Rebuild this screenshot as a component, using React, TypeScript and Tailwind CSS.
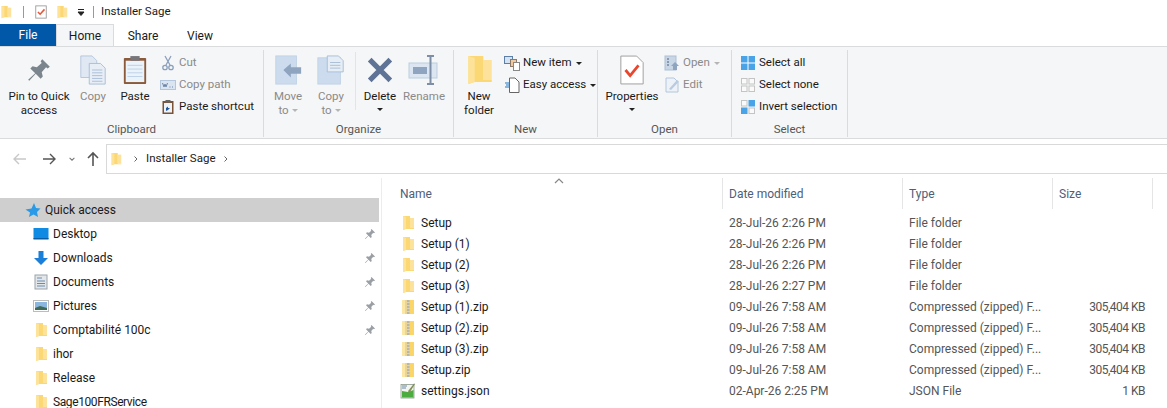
const font = "font-['Roboto','Noto_Sans',sans-serif]";

function Folder({ className = "w-4 h-4" }: { className?: string }) {
  return (
    <svg viewBox="0 0 16 16" preserveAspectRatio="none" className={className}>
      <path d="M10 3 L14 3 L14 13 L10 13Z" fill="#fce29a" />
      <path d="M3 1 L10 1 L10 13 L14 13 L14 14 L6 14 L3 15Z" fill="#fcd874" />
      <path d="M3 1 L6 2 L6 14 L3 15Z" fill="#fde39a" />
    </svg>
  );
}

function Zip() {
  return (
    <svg viewBox="0 0 16 16" className="w-4 h-4">
      <path d="M2 1 L14 1 L14 15 L2 15Z" fill="#fcd567" />
      <path d="M2 1 L5 1 L5 15 L2 15Z" fill="#fbe6a3" />
      <rect x="6.5" y="1" width="3.5" height="14" fill="#d8d4c4" />
      <path d="M7 2 H9.5 M7 5 H9.5 M7 8 H9.5 M7 11 H9.5 M7 14 H9.5" stroke="#8f8c7e" strokeWidth="0.8" />
    </svg>
  );
}

function Json() {
  return (
    <svg viewBox="0 0 16 16" className="w-4 h-4">
      <rect x="1" y="1.5" width="13" height="13.5" fill="#f4f4f0" stroke="#8b9a8b" strokeWidth="0.8" />
      <path d="M2 14.5 L13.5 14.5 L13.5 7 L8 9 L2 8Z" fill="#4bac3f" />
      <path d="M2 3 H7 M2 5 H6" stroke="#6a87a8" strokeWidth="1" />
      <path d="M15 1 L10 9 L8 9.5 L8.5 7.5 L14 0.5Z" fill="#7f8f55" />
    </svg>
  );
}

function Pin({ className = "w-3 h-3", color = "#9a9fa5" }: { className?: string; color?: string }) {
  return (
    <svg viewBox="0 0 24 24" className={className}>
      <path d="M15 2 L22 9 L20 10.5 L18.5 9.5 L14.5 14 L15.5 18 L13.5 20 L9 15.5 L3 22 L2 21 L8.5 15 L4 10.5 L6 8.5 L10 9.5 L14.5 5.5 L13.5 4Z" fill={color} />
    </svg>
  );
}

function Large({ w, label, sub, icon, dim, caret, subCaret }: { w: string; label: string; sub?: string; icon: React.ReactNode; dim?: boolean; caret?: boolean; subCaret?: boolean }) {
  return (
    <div className={`${w} flex flex-col items-center shrink-0 text-center leading-[14px] ${dim ? "text-[#8a8a8a]" : "text-[#1a1a1a]"}`}>
      <div className="h-[36px] flex items-center justify-center mb-[1px]">{icon}</div>
      <span className="whitespace-nowrap">{label}</span>
      {sub && (
        <span className="whitespace-nowrap flex items-center">
          {sub}
          {subCaret && <span className="ml-[3px] w-0 h-0 border-x-[3px] border-x-transparent border-t-[3px] border-t-[#b5b5b5]" />}
        </span>
      )}
      {caret && <Caret />}
    </div>
  );
}

function Caret() {
  return <span className="inline-block mx-auto mt-[5px] w-0 h-0 border-x-[3px] border-x-transparent border-t-[3px] border-t-[#222]" />;
}

function Small({ icon, label, dim, caret, lightCaret }: { icon: React.ReactNode; label: string; dim?: boolean; caret?: boolean; lightCaret?: boolean }) {
  return (
    <div className={`h-[22px] flex items-center whitespace-nowrap ${dim ? "text-[#8a8a8a]" : "text-[#1a1a1a]"}`}>
      <span className="w-[16px] h-[16px] mr-[3px] flex items-center justify-center">{icon}</span>
      <span>{label}</span>
      {caret && <span className={`ml-[4px] w-0 h-0 border-x-[3px] border-x-transparent border-t-[3px] ${lightCaret ? "border-t-[#b5b5b5]" : "border-t-[#222]"}`} />}
    </div>
  );
}

function Group({ w, label, children }: { w: string; label: string; children: React.ReactNode }) {
  return (
    <div className={`${w} shrink-0 h-[87px] mt-[3px] flex flex-col border-r border-[#dadbdc]`}>
      <div className="flex h-[70px] pt-[2px]">{children}</div>
      <div className="text-center text-[#555] leading-[14px] mt-[2px]">{label}</div>
    </div>
  );
}

function SideRow({ icon, label, pinned, tight }: { icon: React.ReactNode; label: string; pinned?: boolean; tight?: boolean }) {
  return (
    <div className="h-[24px] flex items-center pl-[33px] pr-[3px] text-[#1a1a1a]">
      <span className="w-[16px] h-[16px] mr-[4px] flex items-center justify-center">{icon}</span>
      <span className={`flex-1 ${tight ? "tracking-[-0.4px]" : ""}`}>{label}</span>
      {pinned && <Pin />}
    </div>
  );
}

const files = [
  { name: "Setup", date: "28-Jul-26 2:26 PM", type: "File folder", size: "", kind: "d" },
  { name: "Setup (1)", date: "28-Jul-26 2:26 PM", type: "File folder", size: "", kind: "d" },
  { name: "Setup (2)", date: "28-Jul-26 2:26 PM", type: "File folder", size: "", kind: "d" },
  { name: "Setup (3)", date: "28-Jul-26 2:27 PM", type: "File folder", size: "", kind: "d" },
  { name: "Setup (1).zip", date: "09-Jul-26 7:58 AM", type: "Compressed (zipped) F...", size: "305,404 KB", kind: "z" },
  { name: "Setup (2).zip", date: "09-Jul-26 7:58 AM", type: "Compressed (zipped) F...", size: "305,404 KB", kind: "z" },
  { name: "Setup (3).zip", date: "09-Jul-26 7:58 AM", type: "Compressed (zipped) F...", size: "305,404 KB", kind: "z" },
  { name: "Setup.zip", date: "09-Jul-26 7:58 AM", type: "Compressed (zipped) F...", size: "305,404 KB", kind: "z" },
  { name: "settings.json", date: "02-Apr-26 2:25 PM", type: "JSON File", size: "1 KB", kind: "j" },
];

export default function App() {
  return (
    <div className={`${font} w-[1167px] h-[408px] overflow-hidden bg-white text-[12px] text-[#1a1a1a]`}>
      {/* title bar */}
      <div className="h-[24px] flex items-center text-[11.5px]">
        <Folder className="w-[14px] h-[14px] -ml-[1px]" />
        <div className="ml-[10px] w-px h-[12px] bg-[#999]" />
        <svg viewBox="0 0 16 16" className="ml-[10px] w-[14px] h-[14px]">
          <rect x="2" y="1" width="12" height="14" fill="#fff" stroke="#999" />
          <path d="M4.5 8 L7 10.5 L12 5" fill="none" stroke="#e8563a" strokeWidth="1.8" />
        </svg>
        <Folder className="ml-[7px] w-[14px] h-[14px]" />
        <svg viewBox="0 0 10 10" className="ml-[7px] w-[10px] h-[10px]">
          <path d="M2 2.5 H8 M2 5 H8 L5 8.5Z" stroke="#222" fill="#222" strokeWidth="1" />
        </svg>
        <div className="ml-[7px] w-px h-[12px] bg-[#999]" />
        <span className="ml-[7px]">Installer Sage</span>
      </div>

      {/* tabs */}
      <div className="h-[22px] flex items-stretch text-[12px] pt-[1px]">
        <div className="w-[56px] bg-[#0158a8] text-white flex items-center justify-center -mt-[1px]">File</div>
        <div className="w-[58px] bg-[#f5f6f7] border-x border-t border-[#dadbdc] flex items-center justify-center relative z-10 -mt-[1px]">Home</div>
        <div className="w-[58px] flex items-center justify-center">Share</div>
        <div className="w-[56px] flex items-center justify-center">View</div>
      </div>

      {/* ribbon */}
      <div className="h-[93px] bg-[#f5f6f7] border-y border-[#dadbdc] flex text-[11.5px]">
        <Group w="w-[264px]" label="Clipboard">
          <Large w="w-[78px]" label="Pin to Quick" sub="access" icon={<Pin className="w-[26px] h-[26px]" color="#7b858d" />} />
          <Large w="w-[30px]" label="Copy" dim icon={
            <svg viewBox="0 0 32 32" className="w-[30px] h-[32px]">
              <path d="M3 1 H15 L20 6 V24 H3Z" fill="#dfe8f3" stroke="#b4c6dc" />
              <path d="M12 9 H24 L29 14 V31 H12Z" fill="#e8eef6" stroke="#a9bdd6" />
              <path d="M15 16 H26 M15 19 H26 M15 22 H26 M15 25 H26 M15 28 H26" stroke="#a9bdd6" />
            </svg>
          } />
          <div className="w-[12px]" />
          <Large w="w-[30px]" label="Paste" icon={
            <svg viewBox="0 0 28 32" className="w-[26px] h-[32px]">
              <rect x="2" y="3" width="24" height="28" fill="#8b5a3a" rx="1" />
              <rect x="4" y="6" width="20" height="23" fill="#eaf2fa" />
              <path d="M6 11 H22 M6 15 H22 M6 19 H22 M6 23 H22" stroke="#bcd0e6" />
              <rect x="9" y="1" width="10" height="5" fill="#77767a" />
            </svg>
          } />
          <div className="ml-[10px] flex flex-col">
            <Small dim label="Cut" icon={
              <svg viewBox="0 0 16 16" className="w-4 h-4" fill="none" stroke="#8ba0bd" strokeWidth="1.3">
                <path d="M5 1 L10 10 M11 1 L6 10" />
                <circle cx="5" cy="12.5" r="2.2" />
                <circle cx="11" cy="12.5" r="2.2" />
              </svg>
            } />
            <Small dim label="Copy path" icon={
              <svg viewBox="0 0 16 16" className="w-4 h-4">
                <rect x="0.5" y="3.5" width="15" height="9" fill="#dbe5f1" stroke="#b4c6dc" />
                <path d="M2.5 6 L4 10 L5 7 L6 10 L7.5 6 M9.5 10 H10.5 M12 10 H13" fill="none" stroke="#6d87a8" />
              </svg>
            } />
            <Small label="Paste shortcut" icon={
              <svg viewBox="0 0 16 16" className="w-4 h-4">
                <rect x="2.5" y="2" width="11" height="13" fill="#7a5236" />
                <rect x="4" y="4" width="8" height="9.5" fill="#eef3f9" />
                <rect x="5.5" y="1" width="5" height="2.5" fill="#666" />
                <path d="M6 12 V9 L8 7.5 V9 H10 L8 11" fill="#1e56a0" />
              </svg>
            } />
          </div>
        </Group>

        <Group w="w-[190px]" label="Organize">
          <div className="w-[1px]" />
          <Large w="w-[46px]" label="Move" sub="to" subCaret dim icon={
            <svg viewBox="0 0 32 32" className="w-[30px] h-[32px]">
              <rect x="3" y="1" width="22" height="30" fill="#ccdcee" stroke="#c0d2e6" />
              <path d="M11 16 L19 9 V13 H30 V20 H19 V24Z" fill="#8fa5bf" />
            </svg>
          } />
          <Large w="w-[40px]" label="Copy" sub="to" subCaret dim icon={
            <svg viewBox="0 0 32 32" className="w-[30px] h-[32px]">
              <rect x="2" y="3" width="24" height="28" fill="#ccdcee" stroke="#c0d2e6" />
              <path d="M12 1 H24 L29 6 V18 H12Z" fill="#e6edf5" stroke="#a9bdd6" />
              <path d="M15 8 H26 M15 11 H26 M15 14 H26" stroke="#a9bdd6" />
            </svg>
          } />
          <div className="w-[1px] h-[58px] bg-[#e3e4e6] mx-[4px]" />
          <Large w="w-[40px]" label="Delete" caret icon={
            <svg viewBox="0 0 32 32" className="w-[30px] h-[30px]">
              <path d="M5 5 L27 27 M27 5 L5 27" stroke="#5f7396" strokeWidth="5.5" />
            </svg>
          } />
          <Large w="w-[48px]" label="Rename" dim icon={
            <svg viewBox="0 0 32 32" className="w-[32px] h-[32px]">
              <rect x="1" y="9" width="28" height="15" fill="#dbe6f2" stroke="#bccde0" />
              <rect x="5" y="13" width="14" height="7" fill="#8fa5bf" />
              <path d="M19 2 H26 M22.5 2 V30 M19 30 H26" fill="none" stroke="#7d8ea6" strokeWidth="2" />
            </svg>
          } />
        </Group>

        <Group w="w-[144px]" label="New">
          <div className="w-[7px]" />
          <Large w="w-[36px]" label="New" sub="folder" icon={<Folder className="w-[34px] h-[32px]" />} />
          <div className="ml-[7px] flex flex-col">
            <Small label="New item" caret icon={
              <svg viewBox="0 0 16 16" className="w-4 h-4">
                <rect x="0.5" y="1.5" width="8" height="7" fill="#d4e3f3" stroke="#5b7fa6" />
                <rect x="6.5" y="4.5" width="6" height="7" fill="#f0c9a0" stroke="#8d7a68" />
                <rect x="9.5" y="7.5" width="6" height="8" fill="#fff" stroke="#888" />
              </svg>
            } />
            <Small label="Easy access" caret icon={
              <svg viewBox="0 0 16 16" className="w-4 h-4">
                <path d="M5.5 1 H11 L15 5 V15.5 H5.5Z" fill="#fff" stroke="#666" />
                <path d="M1 6 H6 M2 8 H6 M1 10 H5" stroke="#1e78c8" />
              </svg>
            } />
          </div>
        </Group>

        <Group w="w-[134px]" label="Open">
          <div className="w-[6px]" />
          <Large w="w-[56px]" label="Properties" caret icon={
            <svg viewBox="0 0 28 32" className="w-[26px] h-[32px]">
              <path d="M2 1 H19 L26 8 V31 H2Z" fill="#fff" stroke="#9a9a9a" />
              <path d="M7 16 L12 22 L21 11" fill="none" stroke="#e8472e" strokeWidth="3" />
            </svg>
          } />
          <div className="ml-[4px] flex flex-col">
            <Small dim label="Open" caret lightCaret icon={
              <svg viewBox="0 0 16 16" className="w-4 h-4">
                <rect x="1" y="1" width="11" height="14" fill="#c8d6e6" stroke="#aebfd3" />
                <path d="M3 4 H5 M3 7 H5 M3 10 H5" stroke="#74889f" strokeWidth="1.5" />
                <path d="M11 7 L15 11 H13 V15 H9 V11 H7Z" fill="#8fa5bf" />
              </svg>
            } />
            <Small dim label="Edit" icon={
              <svg viewBox="0 0 16 16" className="w-4 h-4">
                <path d="M2 1 H10 L14 5 V15 H2Z" fill="#edf2f8" stroke="#b4c6dc" />
                <path d="M5 12 L13 3 L15 4.5 L7 13Z" fill="#b9cbe0" />
              </svg>
            } />
          </div>
        </Group>

        <Group w="w-[116px]" label="Select">
          <div className="ml-[8px] flex flex-col">
            <Small label="Select all" icon={
              <svg viewBox="0 0 16 16" className="w-4 h-4">
                <rect x="1" y="1" width="14" height="14" fill="#4aa3e6" />
                <path d="M8 1 V15 M1 8 H15" stroke="#fff" strokeWidth="1" />
              </svg>
            } />
            <Small label="Select none" icon={
              <svg viewBox="0 0 16 16" className="w-4 h-4" fill="#fafafa" stroke="#c4c4c4">
                <rect x="1.5" y="1.5" width="5.5" height="5.5" />
                <rect x="9" y="1.5" width="5.5" height="5.5" />
                <rect x="1.5" y="9" width="5.5" height="5.5" />
                <rect x="9" y="9" width="5.5" height="5.5" />
              </svg>
            } />
            <Small label="Invert selection" icon={
              <svg viewBox="0 0 16 16" className="w-4 h-4">
                <rect x="1.5" y="1.5" width="5.5" height="5.5" fill="#fafafa" stroke="#c4c4c4" />
                <rect x="8.5" y="1" width="6.5" height="6.5" fill="#4aa3e6" />
                <rect x="1" y="8.5" width="6.5" height="6.5" fill="#4aa3e6" />
                <rect x="9" y="9" width="5.5" height="5.5" fill="#fafafa" stroke="#c4c4c4" />
              </svg>
            } />
          </div>
        </Group>
      </div>

      {/* nav bar */}
      <div className="h-[39px] flex items-center">
        <div className="w-[106px] shrink-0 flex items-center">
          <svg viewBox="0 0 16 16" className="ml-[12px] w-[16px] h-[16px]" fill="none" stroke="#c8c8c8" strokeWidth="1.4">
            <path d="M2 8 H14 M7 3 L2 8 L7 13" />
          </svg>
          <svg viewBox="0 0 16 16" className="ml-[13px] w-[16px] h-[16px]" fill="none" stroke="#555" strokeWidth="1.4">
            <path d="M2 8 H14 M9 3 L14 8 L9 13" />
          </svg>
          <svg viewBox="0 0 10 10" className="ml-[11px] w-[8px] h-[8px]" fill="none" stroke="#777" strokeWidth="1.3">
            <path d="M2 3.5 L5 6.5 L8 3.5" />
          </svg>
          <svg viewBox="0 0 16 16" className="ml-[9px] w-[16px] h-[16px]" fill="none" stroke="#555" strokeWidth="1.6">
            <path d="M8 15 V2 M3 7 L8 2 L13 7" />
          </svg>
        </div>
        <div className="flex-1 h-[30px] border border-[#d9d9d9] border-r-0 flex items-center pl-[2px] text-[11.5px]">
          <Folder className="w-[14px] h-[14px]" />
          <svg viewBox="0 0 8 8" className="ml-[9px] w-[8px] h-[8px]" fill="none" stroke="#666"><path d="M2.5 1.5 L5 4 L2.5 6.5" /></svg>
          <span className="ml-[6px]">Installer Sage</span>
          <svg viewBox="0 0 8 8" className="ml-[6px] w-[8px] h-[8px]" fill="none" stroke="#666"><path d="M2.5 1.5 L5 4 L2.5 6.5" /></svg>
        </div>
      </div>

      {/* body */}
      <div className="flex h-[230px]">
        <div className="w-[382px] shrink-0 pt-[20px] border-r border-[#ececec] pr-[2px] overflow-hidden">
          <div className="h-[24px] bg-[#cfcfcf] flex items-center pl-[25px] text-[#1a1a1a]">
            <svg viewBox="0 0 16 16" className="w-[16px] h-[16px] mr-[4px]">
              <path d="M9 1 L11 6 L15.5 6.5 L12 10 L13 15 L8.5 12.5 L4 15 L5 10.5 L0.5 7.5 L6.5 6.5Z" fill="#2a9ae6" />
            </svg>
            Quick access
          </div>
          <SideRow label="Desktop" pinned icon={<svg viewBox="0 0 16 16" className="w-4 h-4"><rect x="0.5" y="2" width="15" height="11" fill="#0f8be4" /><rect x="0.5" y="12" width="15" height="1.5" fill="#0a5da3" /></svg>} />
          <SideRow label="Downloads" pinned icon={<svg viewBox="0 0 16 16" className="w-4 h-4"><path d="M5.5 1 H10.5 V8 H15 L8 15 L1 8 H5.5Z" fill="#1a7fd8" /></svg>} />
          <SideRow label="Documents" pinned icon={<svg viewBox="0 0 16 16" className="w-4 h-4"><rect x="2" y="1" width="12" height="14" fill="#e4e7ea" stroke="#9aa3ad" /><path d="M4 4 H9 M4 7 H12 M4 9.5 H12 M4 12 H12" stroke="#6a8bb0" /></svg>} />
          <SideRow label="Pictures" pinned icon={<svg viewBox="0 0 16 16" className="w-4 h-4"><rect x="0.5" y="2.5" width="15" height="11" fill="#fff" stroke="#bcbcbc" /><rect x="2" y="4" width="12" height="8" fill="#8ab6e0" /><path d="M2 10 L7 8 L14 10 V12 H2Z" fill="#3f6b56" /></svg>} />
          <SideRow label="Comptabilité 100c" pinned icon={<Folder />} />
          <SideRow label="ihor" icon={<Folder />} />
          <SideRow label="Release" icon={<Folder />} />
          <SideRow label="Sage100FRService" tight icon={<Folder />} />
        </div>

        <div className="flex-1 min-w-0">
          <div className="h-[34px] flex text-[#4c607a] relative">
            <svg viewBox="0 0 10 6" className="absolute left-[172px] top-0 w-[10px] h-[6px]" fill="none" stroke="#888" strokeWidth="1.2">
              <path d="M1 5 L5 1 L9 5" />
            </svg>
            <div className="w-[341px] pl-[18px] pt-[7px] border-r border-[#e5e5e5] h-[31px]">Name</div>
            <div className="w-[180px] pl-[6px] pt-[7px] border-r border-[#e5e5e5] h-[31px]">Date modified</div>
            <div className="w-[150px] pl-[6px] pt-[7px] border-r border-[#e5e5e5] h-[31px]">Type</div>
            <div className="w-[100px] pl-[6px] pt-[7px] border-r border-[#e5e5e5] h-[31px]">Size</div>
          </div>
          {files.map((f) => (
            <div key={f.name} className="h-[21px] flex items-center">
              <div className="w-[341px] pl-[18px] flex items-center">
                <span className="w-[16px] h-[16px] mr-[5px]">
                  {f.kind === "d" ? <Folder /> : f.kind === "z" ? <Zip /> : <Json />}
                </span>
                {f.name}
              </div>
              <div className="w-[180px] pl-[6px] text-[#555]">{f.date}</div>
              <div className="w-[150px] pl-[6px] text-[#555]">{f.type}</div>
              <div className="w-[100px] pr-[8px] text-right text-[#555] tracking-[-0.5px]">{f.size}</div>
            </div>
          ))}
        </div>
      </div>
    </div>
  );
}
